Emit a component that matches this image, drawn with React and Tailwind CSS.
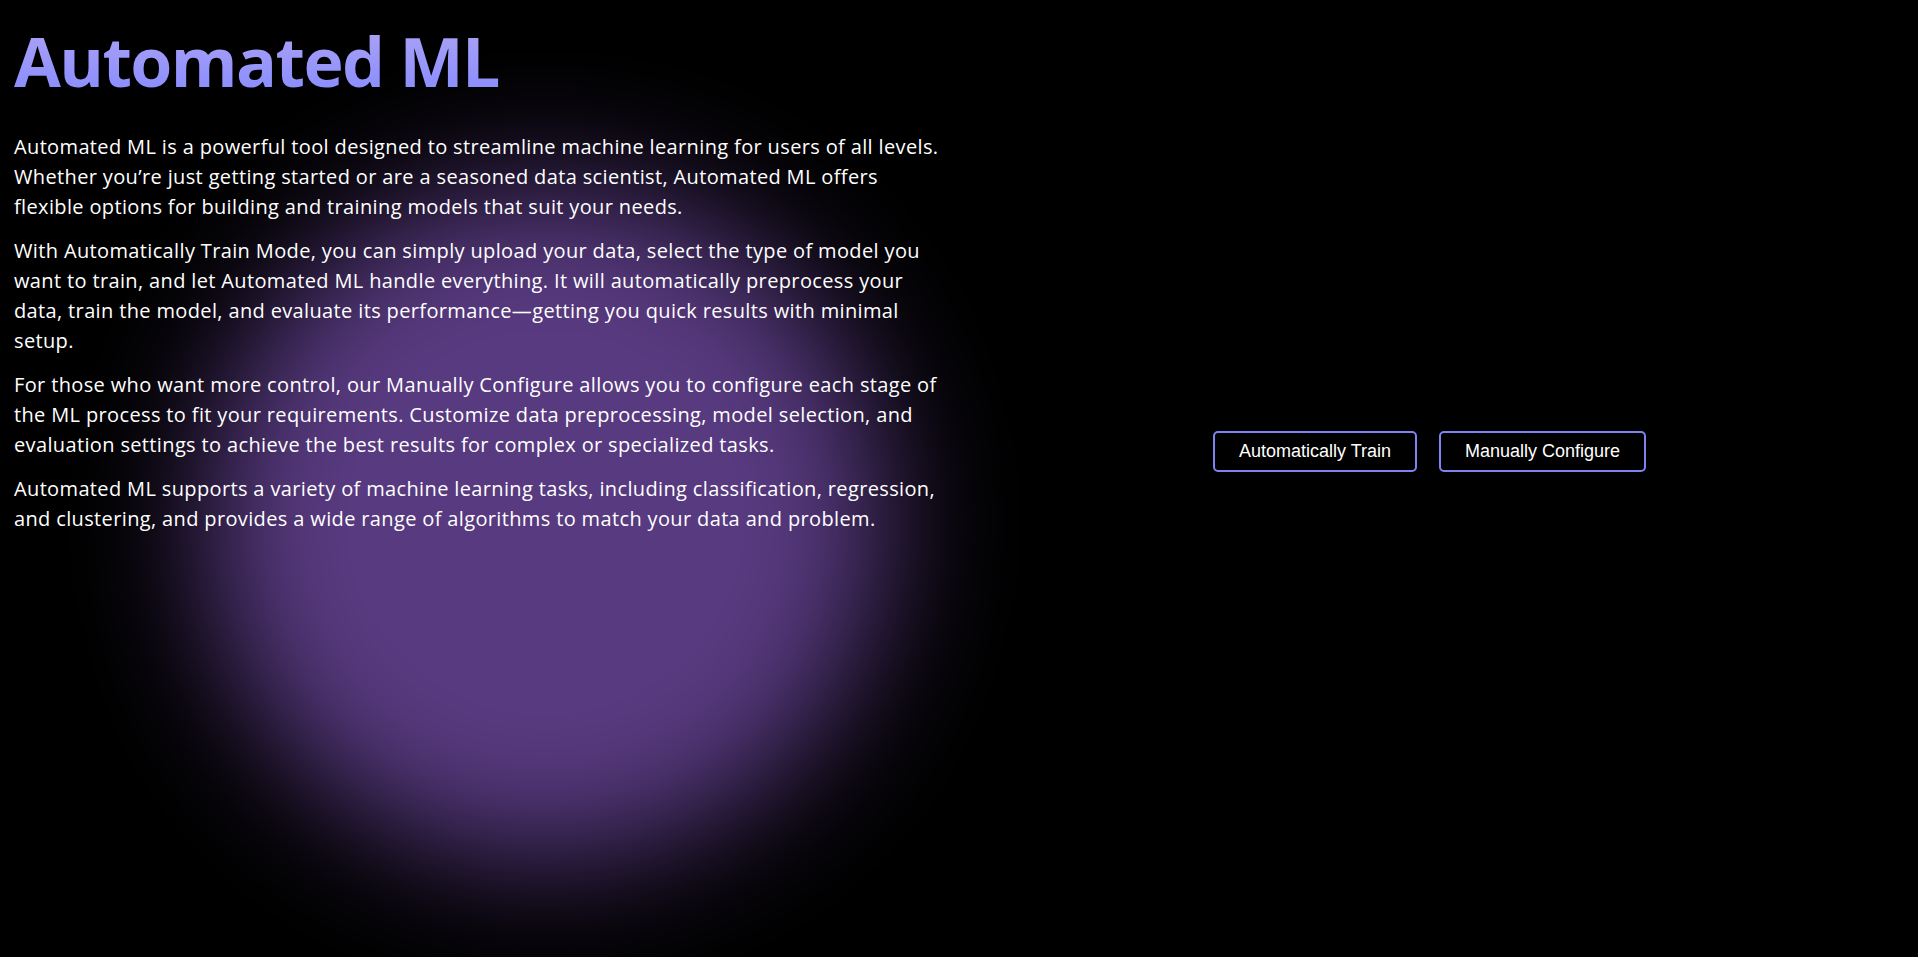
export default function App() {
  const body = "font-['Open_Sans',sans-serif] text-[20px] leading-[30px] tracking-[0.36px] text-white";
  return (
    <div className="relative min-h-screen w-full overflow-hidden bg-black">
      <div className="pointer-events-none absolute left-[205px] top-[185px] h-[675px] w-[680px] rounded-full bg-[#583a80] blur-[65px]" />
      <div className="relative flex min-h-screen w-full">
        <div className="w-[959px] shrink-0 px-[14px] pt-[27px]">
          <h1 className="mb-[37px] bg-linear-to-b from-[#aca2f4] to-[#888cff] bg-clip-text font-['Open_Sans',sans-serif] text-[68px] font-bold leading-[68px] tracking-[-1.6px] text-transparent">
            Automated ML
          </h1>
          <p className={`${body} mb-[14px]`}>
            Automated ML is a powerful tool designed to streamline machine learning for users of all levels.<br />
            Whether you’re just getting started or are a seasoned data scientist, Automated ML offers<br />
            flexible options for building and training models that suit your needs.
          </p>
          <p className={`${body} mb-[14px]`}>
            With Automatically Train Mode, you can simply upload your data, select the type of model you<br />
            want to train, and let Automated ML handle everything. It will automatically preprocess your<br />
            data, train the model, and evaluate its performance—getting you quick results with minimal<br />
            setup.
          </p>
          <p className={`${body} mb-[14px]`}>
            For those who want more control, our Manually Configure allows you to configure each stage of<br />
            the ML process to fit your requirements. Customize data preprocessing, model selection, and<br />
            evaluation settings to achieve the best results for complex or specialized tasks.
          </p>
          <p className={body}>
            Automated ML supports a variety of machine learning tasks, including classification, regression,<br />
            and clustering, and provides a wide range of algorithms to match your data and problem.
          </p>
        </div>
        <div className="flex flex-1 items-center justify-center gap-[22px] pb-[54px] pr-[18px]">
          <button className="rounded-[5px] border-2 border-[#7f82f2] bg-black px-[24px] py-[8px] font-['Liberation_Sans',Arial,sans-serif] text-[18px] leading-[21px] text-white">
            Automatically Train
          </button>
          <button className="rounded-[5px] border-2 border-[#7f82f2] bg-black px-[24px] py-[8px] font-['Liberation_Sans',Arial,sans-serif] text-[18px] leading-[21px] text-white">
            Manually Configure
          </button>
        </div>
      </div>
    </div>
  );
}
